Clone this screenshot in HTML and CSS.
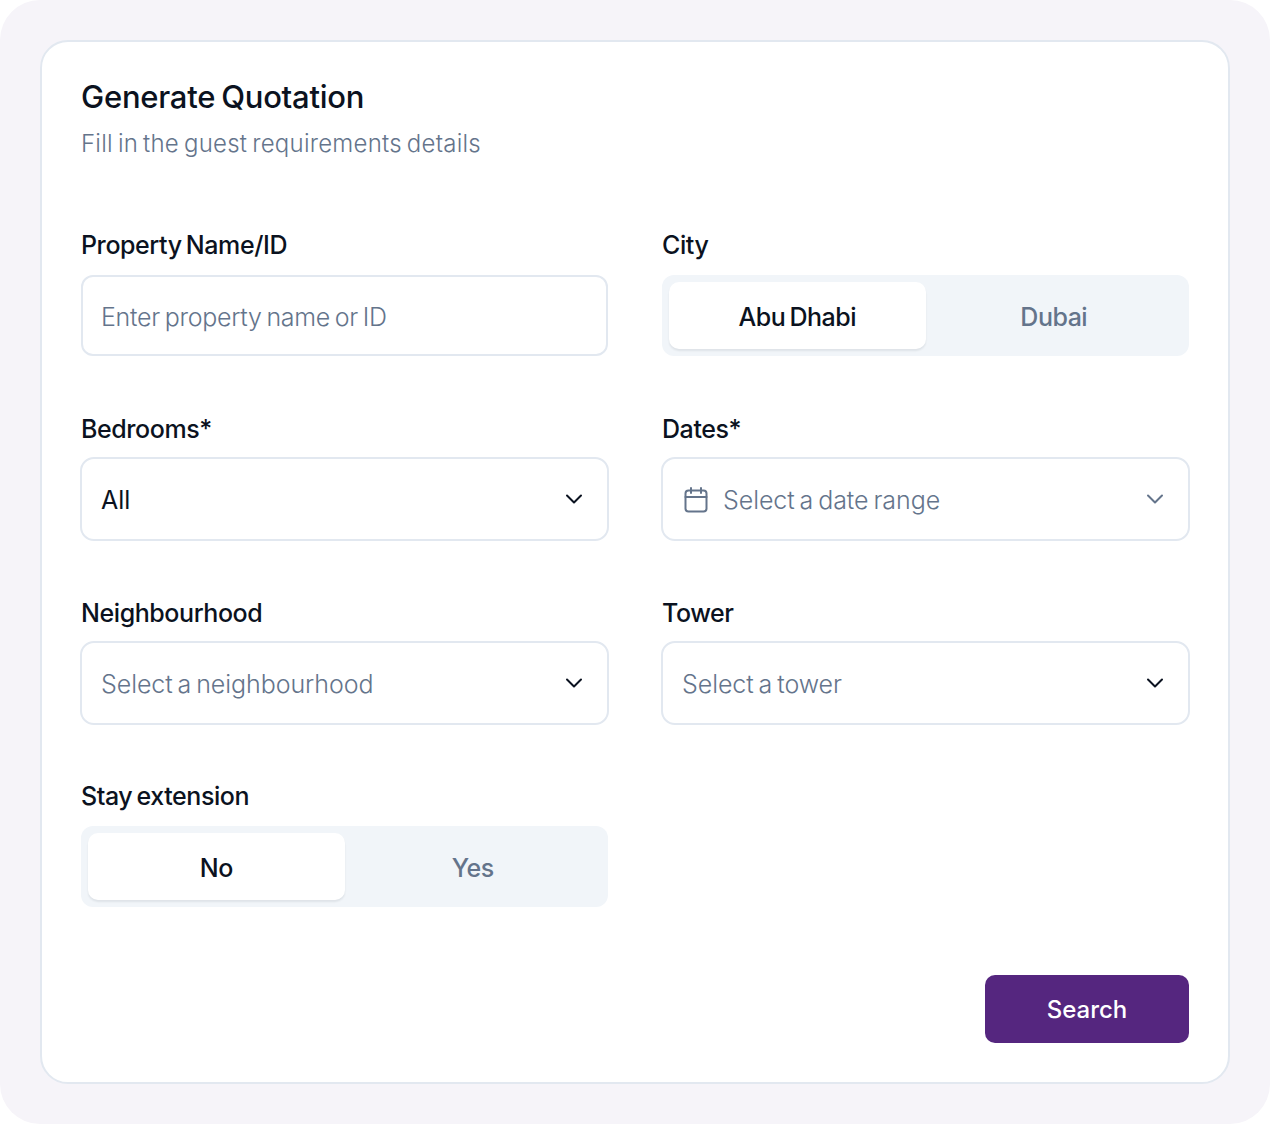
FILE: index.html
```html
<!DOCTYPE html>
<html lang="en">
<head>
    <meta charset="UTF-8">
    <meta name="viewport" content="width=device-width, initial-scale=1.0">
    <title>Generate Quotation</title>
    <link rel="stylesheet" href="styles.css">
</head>
<body>
    <div class="screen">
        <div class="card">
            <h1>Generate Quotation</h1>
            <p class="subtitle">Fill in the guest requirements details</p>

            <div class="form-grid">
                <div class="field">
                    <label>Property Name/ID</label>
                    <div class="input placeholder">Enter property name or ID</div>
                </div>
                <div class="field">
                    <label>City</label>
                    <div class="toggle">
                        <div class="toggle-opt active">Abu Dhabi</div>
                        <div class="toggle-opt">Dubai</div>
                    </div>
                </div>

                <div class="field">
                    <label>Bedrooms*</label>
                    <div class="select">
                        <span class="value">All</span>
                        <svg class="chevron" viewBox="0 0 18 10"><path d="M2 1.5l7 7 7-7"/></svg>
                    </div>
                </div>
                <div class="field">
                    <label>Dates*</label>
                    <div class="select">
                        <svg class="calendar" viewBox="0 0 24 26"><rect x="1.5" y="3.5" width="21" height="21" rx="3"/><path d="M1.5 10h21M7 1v5M17 1v5"/></svg>
                        <span class="placeholder">Select a date range</span>
                        <svg class="chevron light" viewBox="0 0 18 10"><path d="M2 1.5l7 7 7-7"/></svg>
                    </div>
                </div>

                <div class="field">
                    <label>Neighbourhood</label>
                    <div class="select">
                        <span class="placeholder">Select a neighbourhood</span>
                        <svg class="chevron" viewBox="0 0 18 10"><path d="M2 1.5l7 7 7-7"/></svg>
                    </div>
                </div>
                <div class="field">
                    <label>Tower</label>
                    <div class="select">
                        <span class="placeholder">Select a tower</span>
                        <svg class="chevron" viewBox="0 0 18 10"><path d="M2 1.5l7 7 7-7"/></svg>
                    </div>
                </div>

                <div class="field last">
                    <label>Stay extension</label>
                    <div class="toggle">
                        <div class="toggle-opt active">No</div>
                        <div class="toggle-opt">Yes</div>
                    </div>
                </div>
            </div>

            <div class="actions">
                <button class="search-btn">Search</button>
            </div>
        </div>
    </div>
</body>
</html>
```

FILE: styles.css
```css
* {
    margin: 0;
    padding: 0;
    box-sizing: border-box;
}

body {
    font-family: Inter, 'Liberation Sans', sans-serif;
    background: #ffffff;
    color: #0b1220;
}

.screen {
    width: 1270px;
    height: 1124px;
    padding: 40px;
    background: #f6f4f9;
    border-radius: 40px;
}

.card {
    height: 1044px;
    padding: 36px 39px 0;
    background: #ffffff;
    border: 2px solid #e2e8f0;
    border-radius: 28px;
    word-spacing: -2px;
}

h1 {
    font-size: 31px;
    line-height: 38px;
    font-weight: 550;
    letter-spacing: -0.25px;
}

.subtitle {
    margin-top: 12px;
    font-size: 24px;
    line-height: 32px;
    letter-spacing: 0.24px;
    font-weight: 350;
    color: #64748b;
}

.form-grid {
    display: grid;
    grid-template-columns: 527px 527px;
    column-gap: 54px;
    row-gap: 57px;
    margin-top: 69px;
}

.field.last {
    margin-top: -1px;
}

label {
    display: block;
    height: 32px;
    margin-bottom: 14px;
    font-size: 25px;
    line-height: 32px;
    font-weight: 450;
    letter-spacing: -0.42px;
}

.placeholder {
    color: #64748b;
    font-weight: 350;
}

.value {
    color: #0b1220;
}

.input {
    height: 81px;
    padding: 2px 18px 0;
    display: flex;
    align-items: center;
    border: 2px solid #e2e8f0;
    border-radius: 12px;
    font-size: 25px;
    letter-spacing: -0.28px;
}

.select {
    height: 84px;
    margin: -2px -1px -1px;
    padding: 2px 24px 0 19px;
    display: flex;
    align-items: center;
    gap: 15px;
    border: 2px solid #e2e8f0;
    border-radius: 14px;
    font-size: 25px;
    letter-spacing: -0.07px;
}

.chevron {
    width: 18px;
    height: 10px;
    margin-left: auto;
    margin-top: -2px;
    fill: none;
    stroke: #0b1220;
    stroke-width: 2;
    stroke-linecap: round;
    stroke-linejoin: round;
}

.chevron.light {
    stroke: #64748b;
}

.calendar {
    width: 24px;
    height: 26px;
    margin-top: -1px;
    margin-left: 2px;
    fill: none;
    stroke: #64748b;
    stroke-width: 2;
    stroke-linecap: round;
}

.toggle {
    height: 81px;
    padding: 7px;
    display: flex;
    background: #f1f5f9;
    border-radius: 12px;
}

.toggle-opt {
    flex: 1;
    display: flex;
    align-items: center;
    justify-content: center;
    padding-top: 2px;
    font-size: 25px;
    font-weight: 450;
    letter-spacing: -0.5px;
    color: #64748b;
}

.toggle-opt.active {
    background: #ffffff;
    color: #0b1220;
    border-radius: 10px;
    box-shadow: 0 2px 2px rgba(15, 23, 42, 0.08);
}

.actions {
    display: flex;
    justify-content: flex-end;
    margin-top: 68px;
}

.search-btn {
    width: 204px;
    height: 68px;
    border: none;
    border-radius: 10px;
    background: #55267f;
    color: #ffffff;
    font-family: Inter, sans-serif;
    font-size: 24px;
    font-weight: 500;
}
```
